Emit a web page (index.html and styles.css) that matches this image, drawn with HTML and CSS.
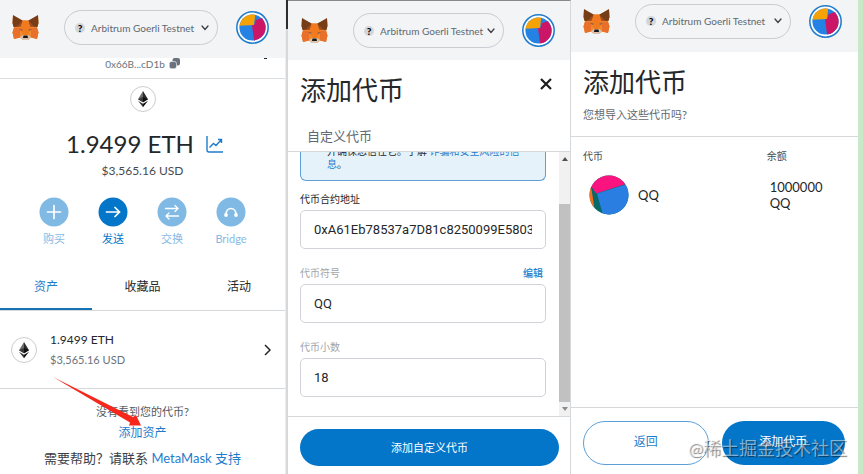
FILE: index.html
```html
<!DOCTYPE html>
<html lang="zh-CN">
<head>
<meta charset="utf-8">
<meta name="viewport" content="width=device-width, initial-scale=1">
<title>MetaMask 添加代币</title>
<link rel="stylesheet" href="styles.css">
</head>
<body>
<svg class="sprite" aria-hidden="true">
  <symbol id="fox" viewBox="0 0 27 25">
    <path fill="#f08a2c" d="M1 1 10.500 5.500H16.500L26 1 26.500 8 25 12.500 26.500 17.500 25 24 19 22.500 16 25H11L8 22.500 2 24 .5 17.500 2 12.500.5 8z"/>
    <path fill="#f27a1e" d="M10.500 5.500H16.500L18.500 12 16 20H11L8.500 12z"/>
    <path fill="#e8702a" d="M.5 17.500 2 12.500 9 13 8 18 8 22.500 2 24zM26.500 17.500 25 12.500 18 13 19 18 19 22.500 25 24z"/>
    <path fill="#763d16" d="M1 0 10.500 5.500 8.500 11.500 1.500 12 .5 8zM26 0 16.500 5.500 18.500 11.500 25.500 12 26.500 8z"/>
    <path fill="#a34c23" d="M10.500 5.500 8.500 11.500 4.500 12zM16.500 5.500 18.500 11.500 22.500 12z"/>
    <path fill="#7d5b55" d="m7 14 3.500.5-.5 1.500zM20 14l-3.500.5.5 1.500z"/>
    <path fill="#d8c3b0" d="m8 22 3-2h5l3 2-3 3h-5z"/>
    <path fill="#161616" d="M11.500 20.500h4l.5 2.500h-5z"/>
  </symbol>
  <symbol id="account" viewBox="0 0 32 32">
    <circle cx="16" cy="16" r="15.200" fill="#fff" stroke="#1f7ccb" stroke-width="1.500"/>
    <clipPath id="disc"><circle cx="16" cy="16" r="12.700"/></clipPath>
    <g clip-path="url(#disc)">
      <path fill="#2382e3" d="M0 0h32v32H0z"/>
      <path fill="#f6a205" d="M0 0h19l-1.500 13.500-17.500 1z"/>
      <path fill="#cb1668" d="M15.500 14 18 13 19 9 27 6 32 8V32H18z"/>
    </g>
  </symbol>
  <symbol id="ether" viewBox="0 0 26 26">
    <circle cx="13" cy="13" r="12.500" fill="#fff" stroke="#c9ccd0"/>
    <path fill="#6b6b6b" d="M13 5 8 13.300 13 16.300z"/>
    <path fill="#2b2b2b" d="m13 5 5 8.300L13 16.300z"/>
    <path fill="#3a3a3a" d="m8 13.300 5-2.300v5.300zM8 14.700 13 17.700v3.500z"/>
    <path fill="#111" d="M18 13.300 13 11v5.300zM18 14.700 13 17.700v3.500z"/>
  </symbol>
  <symbol id="down" viewBox="0 0 8 6"><path d="m1 1 3 3.500L7 1" fill="none" stroke="#3b4046" stroke-width="1.300" stroke-linecap="round"/></symbol>
</svg>

<main class="screens">
  <section class="panel home">
    <header class="topbar">
      <svg class="fox"><use href="#fox"/></svg>
      <label class="network"><span class="mark">?</span>
        <select aria-label="网络"><option>Arbitrum Goerli Testnet</option></select>
        <svg class="down"><use href="#down"/></svg>
      </label>
      <button class="account" aria-label="账户"><svg><use href="#account"/></svg></button>
    </header>
    <div class="address">
      <button class="copy">0x66B...cD1b
        <svg viewBox="0 0 11 11"><rect x="3.500" width="7.500" height="7.500" rx="2" fill="#6a737d"/><rect x=".3" y="3.500" width="7.200" height="7.200" rx="2" fill="#6a737d" stroke="#fff" stroke-width=".6"/></svg>
      </button>
      <span class="more"></span>
    </div>
    <div class="balance">
      <svg class="ether"><use href="#ether"/></svg>
      <div class="amount"><span>1.9499 ETH</span>
        <svg viewBox="0 0 17 17" fill="none" stroke="#1f7ccb" stroke-width="1.400"><path d="M1 0v14q0 2 2 2h14"/><path d="m3.500 11.500 4-4 2.500 2 5.500-6M12 3.500h3.500V7"/></svg>
      </div>
      <p class="fiat">$3,565.16 USD</p>
    </div>
    <nav class="actions">
      <button disabled><svg viewBox="0 0 30 30"><circle cx="15" cy="15" r="14.500"/><path d="M15 8.500v13M8.500 15h13"/></svg>购买</button>
      <button><svg viewBox="0 0 30 30"><circle cx="15" cy="15" r="14.500"/><path d="M8.500 15h13M17 10.500l4.500 4.500-4.500 4.500"/></svg>发送</button>
      <button disabled><svg viewBox="0 0 30 30"><circle cx="15" cy="15" r="14.500"/><path stroke-width="1.300" d="M8.500 11.500h12.500M18 8.500l3 3-3 3M21.500 19H9M12 16l-3 3 3 3"/></svg>交换</button>
      <button disabled><svg viewBox="0 0 30 30"><circle cx="15" cy="15" r="14.500"/><path d="M10 17.500c0-8 10-8 10 0"/><circle class="dot" cx="10" cy="18" r="1.900"/><circle class="dot" cx="20" cy="18" r="1.900"/></svg>Bridge</button>
    </nav>
    <nav class="tabs"><button class="active">资产</button><button>收藏品</button><button>活动</button></nav>
    <button class="asset">
      <svg class="ether"><use href="#ether"/></svg>
      <span class="asset-text"><span>1.9499 ETH</span><small>$3,565.16 USD</small></span>
      <svg class="next" viewBox="0 0 7 12"><path d="m1 1 5 5-5 5" fill="none" stroke="#24272a" stroke-width="1.500"/></svg>
    </button>
    <div class="help">
      <p>没有看到您的代币?</p>
      <a class="import" href="#import">添加资产</a>
      <p class="support">需要帮助？请联系 <a href="#support">MetaMask 支持</a></p>
      <svg class="pointer" viewBox="0 0 90 52"><path fill="#f5281b" d="M1 1 81 41 84 39 89 49.500 77 49.500 78 46.500z"/></svg>
    </div>
  </section>

  <div class="divider"></div>

  <section class="panel custom">
    <header class="topbar">
      <svg class="fox"><use href="#fox"/></svg>
      <label class="network"><span class="mark">?</span>
        <select aria-label="网络"><option>Arbitrum Goerli Testnet</option></select>
        <svg class="down"><use href="#down"/></svg>
      </label>
      <button class="account" aria-label="账户"><svg><use href="#account"/></svg></button>
    </header>
    <div class="heading">
      <h1>添加代币</h1>
      <button class="close" aria-label="关闭"><svg viewBox="0 0 12 12"><path d="m1 1 10 10M11 1 1 11" stroke="#1b1d1f" stroke-width="2.200"/></svg></button>
    </div>
    <div class="subtab">自定义代币</div>
    <div class="scroll">
      <form class="fields" id="token">
        <div class="notice"><p>并确保您信任它。了解 <a href="#risk">诈骗和安全风险的信息</a>。</p></div>
        <div class="field">
          <label for="addr">代币合约地址</label>
          <input id="addr" value="0xA61Eb78537a7D81c8250099E5803">
        </div>
        <div class="field muted">
          <div class="row"><label for="sym">代币符号</label><button type="button">编辑</button></div>
          <input id="sym" value="QQ">
        </div>
        <div class="field muted">
          <label for="dec">代币小数</label>
          <input id="dec" value="18">
        </div>
      </form>
      <div class="bar">
        <svg viewBox="0 0 6 4"><path d="M0 4 3 0l3 4z" fill="#505050"/></svg>
        <span class="thumb"></span>
        <svg viewBox="0 0 6 4"><path d="m0 0 3 4 3-4z" fill="#8a8a8a"/></svg>
      </div>
    </div>
    <footer class="submit"><button class="primary" form="token" type="button">添加自定义代币</button></footer>
  </section>

  <section class="panel confirm">
    <header class="topbar">
      <svg class="fox"><use href="#fox"/></svg>
      <label class="network"><span class="mark">?</span>
        <select aria-label="网络"><option>Arbitrum Goerli Testnet</option></select>
        <svg class="down"><use href="#down"/></svg>
      </label>
      <button class="account" aria-label="账户"><svg><use href="#account"/></svg></button>
    </header>
    <div class="intro"><h1>添加代币</h1><p>您想导入这些代币吗?</p></div>
    <table class="tokens">
      <thead><tr><th>代币</th><th>余额</th></tr></thead>
      <tbody><tr>
        <td><span class="token">
          <svg viewBox="0 0 40 40"><clipPath id="tok"><circle cx="20" cy="20" r="19.500"/></clipPath><g clip-path="url(#tok)"><path fill="#06696b" d="M0 0h40v40H0z"/><path fill="#fb1480" d="M0 0h40v8L7 18.500 2 11z"/><path fill="#2a7de1" d="M8 18.500 40 8.500V40H14z"/><path fill="#f3701e" d="M0 12 2.500 14 5.500 34H0z"/></g></svg>QQ</span></td>
        <td>1000000<br>QQ</td>
      </tr></tbody>
    </table>
    <footer class="choices"><button class="outline">返回</button><button class="primary">添加代币</button>
      <span class="watermark">@稀土掘金技术社区</span>
    </footer>
  </section>
  <div class="edge"></div>
</main>
</body>
</html>
```
FILE: styles.css
```css
* { box-sizing: border-box; }
body {
  margin: 0;
  font-family: Lato, "Noto Sans CJK SC", sans-serif;
  font-size: 12px;
  font-weight: 400;
  line-height: 16px;
  color: #24272a;
  background: #fff;
}
h1, p { margin: 0; font-weight: 400; }
a { color: #1f7ccb; text-decoration: none; }
svg { display: block; flex: none; }
button {
  padding: 0;
  border: 0;
  background: none;
  color: inherit;
  font: inherit;
}
.sprite { position: absolute; width: 0; height: 0; }
.screens {
  display: grid;
  grid-template-columns: 285fr 3px 283fr 287fr 5px;
  min-height: 100vh;
}
.panel { display: flex; flex-direction: column; min-width: 0; }
.divider { background: linear-gradient(#2b2e33 29px, #d6d8da 29px); border-left: 1px solid #eceeef; }
.edge { background: #c8e9c8; }

.topbar {
  display: flex;
  align-items: center;
  flex: none;
  height: 58px;
  padding: 0 16px 3px 12px;
  background: #f2f4f6;
}
.fox { width: 27px; height: 25px; }
.network {
  display: flex;
  align-items: center;
  flex: 1;
  height: 35px;
  margin: 0 18px 0 25px;
  padding: 0 8px 0 10px;
  border: 1px solid #c8cdd2;
  border-radius: 18px;
}
.mark {
  width: 10px;
  height: 10px;
  border-radius: 50%;
  background: #d2d6d9;
  color: #000;
  font-weight: 900;
  font-size: 10px;
  line-height: 10px;
  text-align: center;
}
.network select {
  appearance: none;
  flex: 1;
  min-width: 0;
  padding: 0 0 0 6px;
  border: 0;
  background: none;
  color: #5f6870;
  font: inherit;
  font-size: 10px;
}
.down { width: 8px; height: 6px; }
.account, .account svg { width: 33px; height: 33px; }

.address {
  display: flex;
  justify-content: center;
  position: relative;
  height: 21px;
  padding-bottom: 4px;
  border-bottom: 1px solid #dcdfe2;
}
.copy { display: flex; align-items: center; gap: 4px; height: 11px; color: #6a737d; font-size: 10px; }
.copy svg { width: 11px; height: 11px; }
.more { position: absolute; top: 0; right: 18px; width: 3px; height: 1px; background: #24272a; }
.balance { display: flex; flex-direction: column; align-items: center; padding-top: 7px; }
.ether { width: 26px; height: 26px; }
.amount { display: flex; align-items: center; gap: 12px; margin: 14px 0 1px; padding-left: 4px; font-size: 24px; line-height: 36px; }
.amount svg { width: 17px; height: 17px; }
.fiat { color: #454b51; font-size: 12px; }
.actions { display: flex; justify-content: center; padding-top: 18px; }
.actions button { display: flex; flex-direction: column; align-items: center; gap: 4px; width: 59px; color: #0376c9; font-size: 11px; }
.actions svg { width: 30px; height: 30px; fill: #0376c9; stroke: #fff; stroke-width: 1.700; stroke-linecap: round; }
.actions circle { stroke: none; }
.actions path { fill: none; }
.actions .dot { fill: #fff; }
.actions button:disabled { opacity: .5; }
.tabs { display: grid; grid-template-columns: 92fr 101fr 92fr; margin-top: 18px; border-bottom: 1px solid #d6d9dc; }
.tabs button { height: 45px; border-bottom: 2px solid transparent; }
.tabs .active { border-color: #1672b5; color: #1f7ccb; }
.asset { display: flex; align-items: center; height: 78px; padding: 0 14px 0 11px; border-bottom: 1px solid #d6d9dc; text-align: left; }
.asset-text { display: flex; flex: 1; flex-direction: column; gap: 4px; padding-left: 13px; font-size: 12px; }
.asset-text small { color: #6a737d; font-size: 11px; }
.next { width: 7px; height: 12px; }
.help { display: flex; flex-direction: column; align-items: center; position: relative; padding-top: 15px; color: #535a61; }
.help p { font-size: 11px; }
.help .import { margin-top: 5px; font-size: 12px; }
.help .support { margin-top: 9px; color: #3b4046; font-size: 13px; }
.pointer { position: absolute; left: 52px; top: -13px; width: 90px; height: 52px; }

.custom { border-top: 1px solid #85888c; border-right: 1px solid #d6d9dc; }
.custom .topbar { height: 59px; padding: 0 15px 0 13px; }
h1 { font-size: 26px; line-height: 36px; }
.heading { display: flex; justify-content: space-between; padding: 12px 18px 0 12px; }
.close { height: 24px; }
.close svg { width: 12px; height: 12px; }
.subtab { padding: 20px 19px 7px; border-bottom: 1px solid #d6d9dc; color: #5f6870; font-size: 13px; }
.scroll { display: flex; flex: 1; overflow: hidden; }
.fields { flex: 1; min-width: 0; padding: 0 13px 0 12px; }
.notice {
  display: flow-root;
  height: 29px;
  padding: 0 22px 0 26px;
  border: 1px solid #5da0d8;
  border-top: 0;
  border-radius: 0 0 6px 6px;
  background: #e6f2fa;
  font-size: 10px;
  line-height: 13px;
}
.notice p { margin-top: -7px; }
.field { padding-top: 10px; margin-bottom: 6px; font-size: 10px; }
.field label { display: block; }
.field input {
  display: block;
  width: 100%;
  height: 39px;
  margin-top: 3px;
  padding: 0 13px;
  border: 1px solid #d0d4d8;
  border-radius: 5px;
  background: #fff;
  color: #24272a;
  font: 13px Roboto, sans-serif;
}
.muted label { color: #a0a5aa; }
.row { display: flex; justify-content: space-between; padding-right: 3px; }
.row button { color: #1f7ccb; font-weight: 500; }
.bar { display: flex; flex-direction: column; align-items: center; width: 11px; padding: 5px 0; background: #f1f1f1; }
.bar svg { width: 6px; height: 4px; }
.thumb { width: 11px; height: 198px; margin: 43px 0 auto; background: #c1c1c1; }
.submit { padding: 12px 11px 8px 12px; border-top: 1px solid #d6d9dc; }
.primary, .outline { border-radius: 22px; }
.primary { background: #0376c9; color: #fff; }
.submit .primary { width: 100%; height: 37px; font-size: 11px; }

.confirm .topbar { height: 52px; padding: 0 16px 10px 12px; }
.intro { padding: 12px 12px 13px; border-bottom: 1px solid #d6d9dc; }
.intro p { margin-top: 7px; color: #5f6870; font-size: 11px; }
.tokens { width: 100%; margin-top: 11px; border-collapse: collapse; font-size: 13px; }
.tokens th, .tokens td { padding: 0 0 0 12px; text-align: left; }
.tokens th { color: #454b51; font-size: 10px; font-weight: 400; }
.tokens th:last-child, .tokens td:last-child { width: 36%; }
.tokens td { padding: 11px 0 0 18px; }
.tokens td:last-child { padding-left: 15px; }
.token { display: flex; align-items: center; gap: 9px; }
.token svg { width: 40px; height: 40px; }
.choices { display: flex; gap: 13px; position: relative; margin-top: auto; padding: 13px 13px 9px 12px; border-top: 1px solid #d6d9dc; }
.choices button { flex: 1; height: 44px; font-size: 12px; padding-bottom: 3px; }
.outline { border: 1px solid #5da0d8; color: #1f7ccb; }
.watermark {
  position: absolute;
  right: 11px;
  bottom: 13px;
  color: rgba(255, 255, 255, .5);
  font-size: 18px;
  line-height: 26px;
  text-shadow: 1px 1px 1px rgba(0, 0, 0, .5);
  white-space: nowrap;
}
```
